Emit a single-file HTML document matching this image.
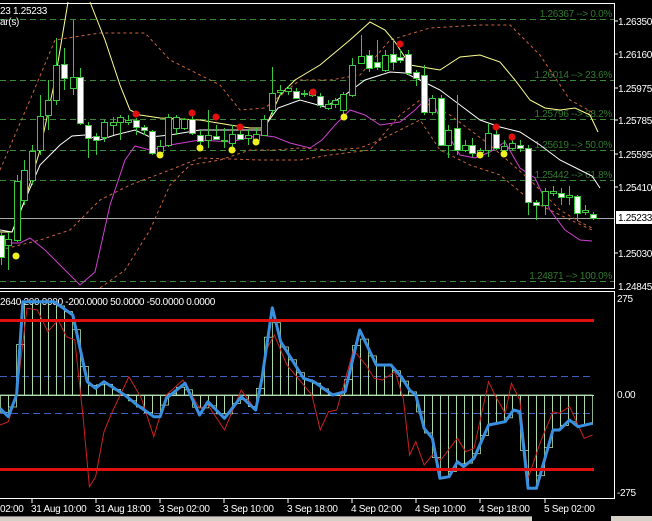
<!DOCTYPE html>
<html><head><meta charset="utf-8"><style>
html,body{margin:0;padding:0;background:#000;width:652px;height:521px;overflow:hidden}
svg{display:block}
text{font-family:"Liberation Sans",sans-serif;font-size:10px;letter-spacing:-0.3px}
</style></head><body>
<svg id="s" width="652" height="521" xmlns="http://www.w3.org/2000/svg">
<rect width="652" height="521" fill="#000"/>
<line x1="0" y1="3.5" x2="615" y2="3.5" stroke="#fff"/>
<line x1="614.5" y1="3" x2="614.5" y2="289" stroke="#fff"/>
<line x1="0" y1="288.5" x2="615" y2="288.5" stroke="#fff"/>
<g stroke="#3a8a3a" stroke-dasharray="6,4" stroke-width="1">
<line x1="0" y1="19.5" x2="614" y2="19.5"/>
<line x1="0" y1="80.5" x2="614" y2="80.5"/>
<line x1="0" y1="119.5" x2="614" y2="119.5"/>
<line x1="0" y1="150.5" x2="614" y2="150.5"/>
<line x1="0" y1="180.5" x2="614" y2="180.5"/>
<line x1="0" y1="281.5" x2="614" y2="281.5"/>
</g>
<line x1="0" y1="218.5" x2="614" y2="218.5" stroke="#aaa"/>
<g fill="#2f7a2f" text-anchor="end">
<text x="612" y="17">1.26367 --&gt; 0.0%</text>
<text x="612" y="78">1.26014 --&gt; 23.6%</text>
<text x="612" y="117">1.25796 --&gt; 38.2%</text>
<text x="612" y="148">1.25619 --&gt; 50.0%</text>
<text x="612" y="178">1.25442 --&gt; 61.8%</text>
<text x="612" y="279">1.24871 --&gt; 100.0%</text>
</g>
<text x="0" y="14" fill="#fff">23 1.25233</text>
<text x="0" y="25" fill="#fff">ar(s)</text>
<g fill="#fff">
<text x="618" y="25">1.26350</text>
<text x="618" y="58">1.26160</text>
<text x="618" y="92">1.25975</text>
<text x="618" y="124">1.25785</text>
<text x="618" y="158">1.25595</text>
<text x="618" y="191">1.25410</text>
<text x="618" y="257">1.25030</text>
<text x="618" y="290">1.24845</text>
</g>
<g stroke="#fff"><line x1="615" y1="21" x2="618" y2="21"/><line x1="615" y1="54" x2="618" y2="54"/><line x1="615" y1="88" x2="618" y2="88"/><line x1="615" y1="120" x2="618" y2="120"/><line x1="615" y1="154" x2="618" y2="154"/><line x1="615" y1="187" x2="618" y2="187"/><line x1="615" y1="253" x2="618" y2="253"/></g>
<rect x="616" y="211" width="36" height="13" fill="#fff"/>
<text x="618" y="221" fill="#000">1.25233</text>
<g id="main" fill="none"></g>
<line x1="0" y1="291.5" x2="615" y2="291.5" stroke="#fff"/>
<line x1="614.5" y1="291" x2="614.5" y2="499" stroke="#fff"/>
<line x1="0" y1="498.5" x2="615" y2="498.5" stroke="#fff"/>
<text x="0" y="305" fill="#fff">2640 200.0000 -200.0000 50.0000 -50.0000 0.0000</text>
<g fill="#fff"><text x="617" y="302">275</text><text x="617" y="398">0.00</text><text x="617" y="496">-275</text></g>
<line x1="0" y1="376.5" x2="594" y2="376.5" stroke="#4060c0" stroke-dasharray="7,4"/>
<line x1="0" y1="413.5" x2="594" y2="413.5" stroke="#4060c0" stroke-dasharray="7,4"/>
<g id="ind" fill="none"></g>
<line x1="0" y1="320.5" x2="594" y2="320.5" stroke="#e01010" stroke-width="3"/>
<line x1="0" y1="469.5" x2="594" y2="469.5" stroke="#e01010" stroke-width="3"/>
<g stroke="#fff"><line x1="32" y1="499" x2="32" y2="503"/><line x1="96" y1="499" x2="96" y2="503"/><line x1="160" y1="499" x2="160" y2="503"/><line x1="224" y1="499" x2="224" y2="503"/><line x1="288" y1="499" x2="288" y2="503"/><line x1="352" y1="499" x2="352" y2="503"/><line x1="416" y1="499" x2="416" y2="503"/><line x1="480" y1="499" x2="480" y2="503"/><line x1="545" y1="499" x2="545" y2="503"/></g>
<g fill="#fff">
<text x="0" y="512">02:00</text>
<text x="31" y="512">31 Aug 10:00</text>
<text x="95" y="512">31 Aug 18:00</text>
<text x="159" y="512">3 Sep 02:00</text>
<text x="223" y="512">3 Sep 10:00</text>
<text x="287" y="512">3 Sep 18:00</text>
<text x="351" y="512">4 Sep 02:00</text>
<text x="415" y="512">4 Sep 10:00</text>
<text x="479" y="512">4 Sep 18:00</text>
<text x="544" y="512">5 Sep 02:00</text>
</g>
<rect x="0" y="516" width="532" height="5" fill="#d4d0c8"/>
<rect x="0" y="516" width="532" height="1" fill="#808080"/>
<rect x="611" y="516" width="41" height="5" fill="#d4d0c8"/>
</svg>
<script>
var NS="http://www.w3.org/2000/svg";
function el(p,t,a){var e=document.createElementNS(NS,t);for(var k in a)e.setAttribute(k,a[k]);p.appendChild(e);return e;}
function pts(a){var s=[];for(var i=0;i<a.length;i+=2)s.push(a[i]+","+a[i+1]);return s.join(" ");}
var m=document.getElementById("main");
el(m,"polyline",{points:pts([0,170,30,100,55,40,100,33,145,33,170,60,200,75,220,85,240,110,265,108,300,80,330,80,360,75,390,40,430,28,480,25,510,25,540,55,570,100,592,112]),stroke:"#c8643c","stroke-dasharray":"3,3"});
el(m,"polyline",{points:pts([0,250,40,240,70,230,100,200,130,185,170,170,200,158,260,160,300,160,330,155,370,150,400,115,420,100,450,115,490,145,530,180,560,210,580,222,592,228]),stroke:"#c8643c","stroke-dasharray":"3,3"});
el(m,"polyline",{points:pts([100,288,125,270,150,230,170,185,190,165,220,160,250,150,275,150,300,148,330,150,360,148,380,140,400,130,420,120,440,150,470,165,500,175,530,200,560,215,592,230]),stroke:"#c8643c","stroke-dasharray":"3,3"});
el(m,"polyline",{points:pts([0,232,12,232,25,200,40,150,55,80,68,2]),stroke:"#ffff90"});
el(m,"polyline",{points:pts([90,2,105,40,120,85,130,110,140,115,160,118,200,120,230,125,250,128,265,128,280,95,295,80,320,65,350,40,370,22,385,30,395,42,410,65,440,70,460,57,480,55,500,62,515,80,530,100,545,108,560,110,575,108,590,115,598,132]),stroke:"#ffff90"});
el(m,"polyline",{points:pts([0,230,12,232,25,200,40,165,60,145,72,136,85,135,100,140,115,135,135,130,150,137,170,135,200,130,230,130,262,130,278,108,300,100,325,107,345,95,365,80,390,72,405,73,420,80,440,90,460,105,480,120,500,127,520,132,540,145,560,160,580,170,592,176,600,188]),stroke:"#ffffff"});
el(m,"polyline",{points:pts([0,237,10,243,20,243,30,238,45,250,60,265,80,285,95,272,110,205,125,160,135,146,150,150,170,145,200,140,230,142,260,135,275,137,290,143,310,148,322,140,335,125,350,110,365,115,380,125,400,122,415,110,425,100,432,100,445,130,460,155,475,158,490,152,505,142,520,168,535,178,550,210,565,230,580,240,592,241]),stroke:"#d040d0"});
var C=[[1,235,257,230,265,1],[8,239,245,232,270,0],[17,181,240,175,242,0],[24,170,200,160,205,0],[32,151,180,145,185,0],[40,116,150,95,155,0],[48,100,115,80,130,0],[56,65,100,38,105,0],[64,64,78,48,90,1],[73,77,88,20,95,0],[80,77,123,68,125,1],[88,125,138,122,158,1],[96,136,140,133,155,1],[104,122,137,120,142,0],[113,122,125,117,135,0],[120,117,122,115,140,0],[128,120,122,115,125,0],[136,120,127,118,135,1],[144,127,130,125,135,1],[152,131,153,130,155,1],[160,146,152,140,155,0],[168,117,145,114,147,0],[176,117,128,115,135,0],[184,119,128,118,130,0],[192,119,133,116,135,1],[200,135,141,130,148,1],[208,135,140,110,148,0],[216,136,139,125,140,1],[224,140,141,128,148,0],[232,134,143,125,150,0],[240,134,139,130,140,1],[248,135,138,130,145,0],[256,134,140,128,142,0],[264,119,135,115,135,0],[272,93,110,67,115,0],[280,90,92,85,95,0],[288,88,91,86,95,0],[296,91,98,88,99,1],[304,93,94,90,97,0],[312,91,95,90,97,0],[320,96,105,93,108,1],[328,104,108,100,110,0],[335,100,104,98,108,0],[343,94,110,92,117,0],[352,65,95,58,97,0],[361,56,63,35,63,0],[369,55,68,50,72,1],[377,62,67,40,70,1],[385,55,70,50,72,0],[393,54,62,40,70,1],[400,57,60,50,63,1],[408,54,73,50,75,1],[416,72,78,70,86,1],[424,75,112,65,115,1],[432,98,112,95,115,0],[441,98,145,95,145,1],[448,130,145,125,158,0],[457,128,150,95,155,1],[465,145,150,140,152,0],[472,145,153,138,157,1],[480,150,152,148,155,0],[488,133,150,123,157,0],[496,134,148,128,150,1],[504,146,150,140,152,0],[512,143,148,140,150,0],[520,145,148,140,152,1],[528,148,202,145,215,1],[536,202,205,200,220,1],[545,191,205,188,215,0],[553,191,193,186,196,0],[561,193,197,188,205,1],[569,195,197,186,205,0],[577,196,213,195,221,1],[585,210,212,205,215,0],[593,214,218,212,220,1]];
C.forEach(function(c){
 el(m,"line",{x1:c[0]+0.5,y1:c[3],x2:c[0]+0.5,y2:c[4],stroke:"#3cc83c"});
 var h=Math.max(1,c[2]-c[1]);
 el(m,"rect",{x:c[0]-2.5,y:c[1]+0.5,width:6,height:h,fill:c[5]?"#ffffff":"#000",stroke:"#3cc83c"});
});
[[136,114],[192,113],[216,117],[240,127],[313,92],[400,44],[496,127],[512,137]].forEach(function(p){el(m,"circle",{cx:p[0],cy:p[1],r:3.5,fill:"#e01010"});});
[[16,256],[160,155],[200,148],[232,150],[256,142],[344,117],[480,155],[504,154]].forEach(function(p){el(m,"circle",{cx:p[0],cy:p[1],r:3.5,fill:"#f0f020"});});
var g=document.getElementById("ind");
function cv(a){var r=[];for(var i=0;i<a.length;i+=2){r.push((a[i]/2.405).toFixed(1),(285+a[i+1]/3).toFixed(1));}return r;}
var B=[0,370,20,395,40,330,55,50,130,50,175,90,210,290,230,310,250,290,300,330,330,360,370,395,385,395,400,340,445,295,480,390,500,350,540,400,580,335,615,375,630,280,655,68,675,170,700,220,730,280,755,290,800,330,830,320,865,135,905,240,940,240,965,275,985,315,1000,330,1020,430,1040,460,1058,580,1080,575,1100,530,1115,545,1140,520,1175,420,1215,410,1235,375,1250,380,1270,610,1290,610,1330,435,1345,435,1370,405,1390,425,1425,415];
var R=[0,420,20,410,40,330,65,70,90,75,115,140,140,105,160,155,180,165,200,400,215,605,230,575,250,440,270,380,310,275,340,340,370,455,400,330,440,285,480,370,500,360,540,435,580,315,615,375,640,195,660,150,690,240,750,330,770,435,790,380,810,375,850,195,880,240,900,280,920,285,950,260,970,340,985,510,1000,470,1020,540,1040,510,1060,525,1100,460,1120,500,1140,490,1175,290,1190,330,1215,385,1230,295,1250,345,1270,580,1300,470,1330,380,1345,385,1370,365,1405,460,1425,450];
var bp=cv(B);
function yAt(x){for(var i=0;i<bp.length-2;i+=2){var x0=+bp[i],x1=+bp[i+2];if(x>=x0&&x<=x1){var t=(x-x0)/((x1-x0)||1);return +bp[i+1]+t*(bp[i+3]-bp[i+1]);}}return 395;}
el(g,"line",{x1:0,y1:395.5,x2:594,y2:395.5,stroke:"#b0e0b0"});
for(var x=0;x<=592;x+=8){var y=yAt(x+4);var t=Math.min(395,y),h=Math.abs(y-395);el(g,"rect",{x:x+0.5,y:t.toFixed(1),width:8,height:h.toFixed(1),stroke:"#b0e0b0","stroke-width":0.8});}
el(g,"polyline",{points:pts(cv(R)),stroke:"#d02020","stroke-width":1});
el(g,"polyline",{points:pts(bp),stroke:"#3a90e0","stroke-width":3,"stroke-linejoin":"round"});
</script>
</body></html>
